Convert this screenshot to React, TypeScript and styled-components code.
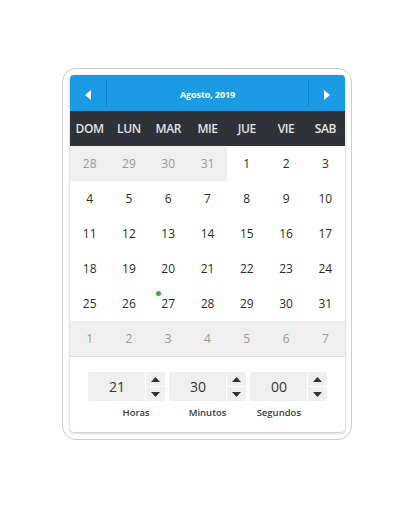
import React from "react";
import styled, { createGlobalStyle } from "styled-components";

const Global = createGlobalStyle`
  html, body { margin: 0; padding: 0; background: #fff; }
  body { font-family: "Open Sans", "Liberation Sans", sans-serif; }
`;

const Page = styled.div`
  padding: 68px 0 0 62px;
`;

const Frame = styled.div`
  box-sizing: border-box;
  width: 290px;
  height: 372px;
  border: 1px solid #cdcdcd;
  border-radius: 14px;
  padding: 6px 6px 0 7px;
`;

const Card = styled.div`
  width: 275px;
  background: #fff;
  border-radius: 4px;
  box-shadow: 0 1px 3px rgba(0, 0, 0, 0.28);
  overflow: hidden;
`;

const Header = styled.div`
  height: 36px;
  background: #1a9be3;
  display: flex;
  align-items: stretch;
`;

const NavButton = styled.div`
  width: 36px;
  display: flex;
  align-items: center;
  justify-content: center;
  padding-top: 3px;
  box-sizing: border-box;
`;

const Separator = styled.div`
  width: 1px;
  margin: 5px 0 5px;
  background: #1381c6;
`;

const Title = styled.div`
  flex: 1;
  display: flex;
  align-items: center;
  justify-content: center;
  padding-top: 3px;
  color: #fff;
  font-weight: 700;
  font-size: 9px;
  letter-spacing: -0.1px;
`;

const Weekdays = styled.div`
  height: 35px;
  background: #2f3237;
  display: grid;
  grid-template-columns: repeat(7, 1fr);
  align-items: center;
`;

const Weekday = styled.div`
  text-align: center;
  color: #e2e2e2;
  font-size: 12px;
  font-weight: 600;
  letter-spacing: -0.4px;
`;

const Grid = styled.div`
  display: grid;
  grid-template-columns: repeat(7, 1fr);
  grid-auto-rows: 35px;
`;

const Day = styled.div<{ $muted?: boolean }>`
  position: relative;
  display: flex;
  align-items: center;
  justify-content: center;
  font-size: 12px;
  color: ${(p) => (p.$muted ? "#9a9a9a" : "#2b2b2b")};
  background: ${(p) => (p.$muted ? "#efefef" : "#fff")};
`;

const Dot = styled.span`
  position: absolute;
  left: 7px;
  top: 5px;
  width: 5px;
  height: 5px;
  border-radius: 50%;
  background: #35b53f;
`;

const TimeSection = styled.div`
  border-top: 1px solid #dcdcdc;
  padding: 15px 0 13px;
`;

const Spinners = styled.div`
  display: flex;
  justify-content: center;
  gap: 4px;
`;

const Spinner = styled.div`
  width: 77px;
  height: 29px;
  display: flex;
  border-radius: 3px;
  overflow: hidden;
`;

const Value = styled.div`
  flex: 1;
  background: #efefef;
  display: flex;
  align-items: center;
  justify-content: center;
  font-size: 14px;
  color: #333;
  padding-left: 1px;
`;

const Arrows = styled.div`
  width: 19px;
  margin-left: 1px;
  display: flex;
  flex-direction: column;
  gap: 1px;
`;

const ArrowBtn = styled.div`
  flex: 1;
  background: #efefef;
  display: flex;
  align-items: center;
  justify-content: center;
`;

const Labels = styled.div`
  width: 214px;
  margin: 6px auto 0;
  display: grid;
  grid-template-columns: repeat(3, 1fr);
`;

const Label = styled.div`
  text-align: center;
  font-size: 9.5px;
  font-weight: 600;
  color: #3a3a3a;
  line-height: 12px;
`;

const Tri = ({ dir, w, h, color }: { dir: "l" | "r" | "u" | "d"; w: number; h: number; color: string }) => {
  const pts =
    dir === "l"
      ? `${w},0 ${w},${h} 0,${h / 2}`
      : dir === "r"
      ? `0,0 0,${h} ${w},${h / 2}`
      : dir === "u"
      ? `0,${h} ${w},${h} ${w / 2},0`
      : `0,0 ${w},0 ${w / 2},${h}`;
  return (
    <svg width={w} height={h} viewBox={`0 0 ${w} ${h}`} style={{ display: "block" }}>
      <polygon points={pts} fill={color} />
    </svg>
  );
};

const weekdays = ["DOM", "LUN", "MAR", "MIE", "JUE", "VIE", "SAB"];

type Cell = { n: number; muted: boolean; dot?: boolean };
const cells: Cell[] = [];
[28, 29, 30, 31].forEach((n) => cells.push({ n, muted: true }));
for (let i = 1; i <= 31; i++) cells.push({ n: i, muted: false, dot: i === 27 });
for (let i = 1; i <= 7; i++) cells.push({ n: i, muted: true });

const times = [
  { v: "21", label: "Horas" },
  { v: "30", label: "Minutos" },
  { v: "00", label: "Segundos" },
];

export default function App() {
  return (
    <>
      <Global />
      <Page>
        <Frame>
          <Card>
            <Header>
              <NavButton>
                <Tri dir="l" w={6} h={10} color="#fff" />
              </NavButton>
              <Separator />
              <Title>Agosto, 2019</Title>
              <Separator />
              <NavButton>
                <Tri dir="r" w={6} h={10} color="#fff" />
              </NavButton>
            </Header>
            <Weekdays>
              {weekdays.map((d) => (
                <Weekday key={d}>{d}</Weekday>
              ))}
            </Weekdays>
            <Grid>
              {cells.map((c, i) => (
                <Day key={i} $muted={c.muted}>
                  {c.dot && <Dot />}
                  {c.n}
                </Day>
              ))}
            </Grid>
            <TimeSection>
              <Spinners>
                {times.map((t) => (
                  <Spinner key={t.label}>
                    <Value>{t.v}</Value>
                    <Arrows>
                      <ArrowBtn>
                        <Tri dir="u" w={9} h={5} color="#333" />
                      </ArrowBtn>
                      <ArrowBtn>
                        <Tri dir="d" w={9} h={5} color="#333" />
                      </ArrowBtn>
                    </Arrows>
                  </Spinner>
                ))}
              </Spinners>
              <Labels>
                {times.map((t) => (
                  <Label key={t.label}>{t.label}</Label>
                ))}
              </Labels>
            </TimeSection>
          </Card>
        </Frame>
      </Page>
    </>
  );
}
